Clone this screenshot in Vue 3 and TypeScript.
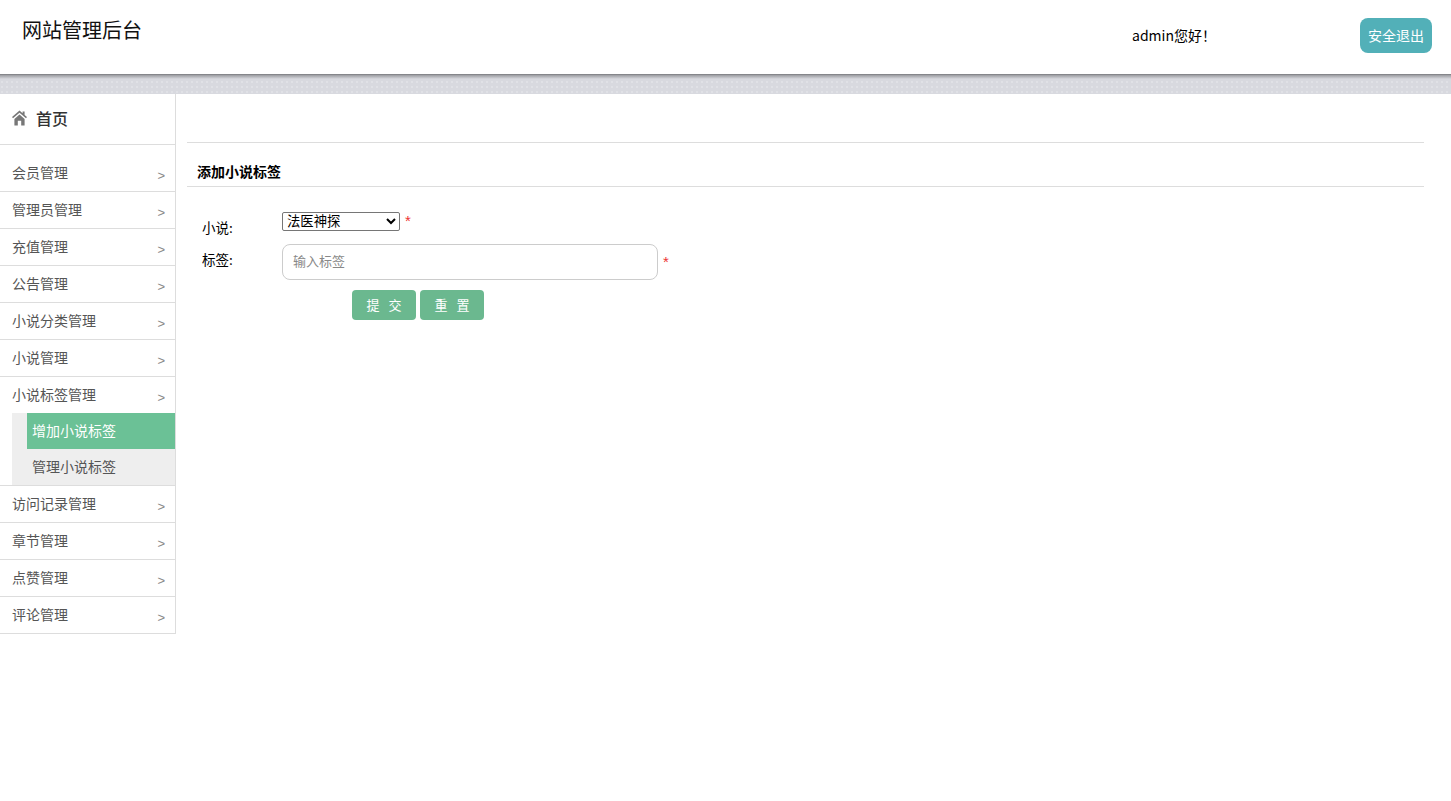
<script setup lang="ts">
import { ref } from 'vue'

interface MenuItem {
  label: string
  children?: { label: string; active?: boolean }[]
}

const menu: MenuItem[] = [
  { label: '会员管理' },
  { label: '管理员管理' },
  { label: '充值管理' },
  { label: '公告管理' },
  { label: '小说分类管理' },
  { label: '小说管理' },
  {
    label: '小说标签管理',
    children: [{ label: '增加小说标签', active: true }, { label: '管理小说标签' }],
  },
  { label: '访问记录管理' },
  { label: '章节管理' },
  { label: '点赞管理' },
  { label: '评论管理' },
]
const novel = ref('法医神探')
const tag = ref('')
</script>

<template>
  <div class="page">
    <header class="top">
      <h1 class="brand">网站管理后台</h1>
      <span class="hello">admin您好！</span>
      <a class="logout">安全退出</a>
    </header>
    <div class="band"></div>
    <div class="body">
      <aside class="side">
        <div class="home">
          <svg class="home-ico" viewBox="0 0 15 16" width="15" height="16" aria-hidden="true">
            <path fill="#777" d="M7.5 0.5 L10.6 3.2 V1.5 H12.6 V5 L15 7.1 L14 8.3 L7.5 2.8 L1 8.3 L0 7.1 Z M2.4 9 L7.5 4.6 L12.6 9 V15.5 H9.2 V10.8 H5.8 V15.5 H2.4 Z" />
          </svg>
          <span>首页</span>
        </div>
        <ul class="menu">
          <li v-for="m in menu" :key="m.label" class="item">
            <div class="row">
              <span>{{ m.label }}</span>
              <span class="arrow">&gt;</span>
            </div>
            <ul v-if="m.children" class="sub">
              <li v-for="c in m.children" :key="c.label" :class="['sub-item', { on: c.active }]">{{ c.label }}</li>
            </ul>
          </li>
        </ul>
      </aside>
      <main class="main">
        <div class="crumb"></div>
        <h2 class="title">添加小说标签</h2>
        <form class="form" @submit.prevent>
          <div class="field first">
            <label class="lab">小说:</label>
            <select v-model="novel" class="sel">
              <option>法医神探</option>
            </select>
            <span class="req req-sel">*</span>
          </div>
          <div class="field">
            <label class="lab">标签:</label>
            <input v-model="tag" class="inp" placeholder="输入标签" />
            <span class="req">*</span>
          </div>
          <div class="btns">
            <button type="button" class="btn">提 交</button>
            <button type="reset" class="btn">重 置</button>
          </div>
        </form>
      </main>
    </div>
  </div>
</template>

<style>
html,
body {
  margin: 0;
  background: #fff;
}
</style>

<style scoped>
.page {
  width: 1451px;
  height: 801px;
  overflow: hidden;
  font-family: "Noto Sans CJK SC", "Liberation Sans", sans-serif;
  font-size: 14px;
  color: #000;
}
.top {
  height: 74px;
  display: flex;
  background: #fff;
}
.brand {
  margin: 15px 0 0 22px;
  width: 1110px;
  font-size: 20px;
  line-height: 30px;
  font-weight: 400;
  color: #111;
}
.hello {
  margin-top: 25px;
  width: 228px;
  font-size: 14px;
  line-height: 21px;
}
.logout {
  margin-top: 18px;
  width: 72px;
  height: 35px;
  line-height: 35px;
  border-radius: 8px;
  background: #52b0b8;
  color: #fff;
  font-size: 14px;
  text-align: center;
}
.band {
  height: 20px;
  box-sizing: border-box;
  border-top: 1px solid #85868a;
  background-color: #d8d9df;
  background-image:
    linear-gradient(#9a9ba0, #d8d9df 4px),
    radial-gradient(circle at 2px 2px, #e0e1e6 0.9px, transparent 1px);
  background-size: 100% 4px, 5px 5px;
  background-repeat: no-repeat, repeat;
}
.body {
  display: flex;
}
.side {
  width: 176px;
  height: 540px;
  box-sizing: border-box;
  border-right: 1px solid #ddd;
  border-bottom: 1px solid #ddd;
  flex: none;
}
.home {
  height: 51px;
  box-sizing: border-box;
  border-bottom: 1px solid #ddd;
  padding: 0 0 0 12px;
  display: flex;
  align-items: center;
  gap: 9px;
  font-size: 16px;
  font-weight: 500;
  color: #333;
}
.home span {
  position: relative;
  top: -1px;
}
.home-ico {
  flex: none;
  position: relative;
  top: -1px;
}
.menu {
  list-style: none;
  margin: 10px 0 0;
  padding: 0;
}
.item {
  border-bottom: 1px solid #ddd;
}
.item:last-child {
  border-bottom: none;
}
.row {
  height: 36px;
  box-sizing: border-box;
  padding: 0 10px 2px 12px;
  display: flex;
  justify-content: space-between;
  align-items: center;
  color: #555;
  font-size: 14px;
}
.arrow {
  position: relative;
  top: 3px;
  color: #888;
  font-family: "Liberation Sans", sans-serif;
  font-size: 13px;
}
.sub {
  list-style: none;
  margin: 0 0 0 12px;
  padding: 0 0 0 15px;
  background: #eee;
}
.sub-item {
  height: 36px;
  line-height: 34px;
  padding-left: 5px;
  color: #555;
}
.sub-item.on {
  background: #6bc196;
  color: #fff;
}
.main {
  margin-left: 11px;
  width: 1237px;
}
.crumb {
  height: 48px;
  border-bottom: 1px solid #ddd;
}
.title {
  margin: 0;
  height: 44px;
  box-sizing: border-box;
  border-bottom: 1px solid #ddd;
  padding: 18px 0 0 10px;
  font-size: 14px;
  line-height: 20px;
  font-weight: 700;
}
.form {
  padding-left: 15px;
}
.field {
  display: flex;
  align-items: flex-start;
  height: 36px;
}
.field.first {
  margin-top: 25px;
  height: 32px;
}
.lab {
  width: 80px;
  flex: none;
  font-size: 13.5px;
  line-height: 20px;
  margin-top: 5px;
}
.sel {
  width: 118px;
  height: 19px;
  padding: 0;
  box-sizing: border-box;
  font: 13.33px "Liberation Sans", "Noto Sans CJK SC", sans-serif;
  background: #fff;
  border: 1px solid #767676;
  border-radius: 2px;
  color: #000;
}
.inp {
  width: 376px;
  height: 36px;
  box-sizing: border-box;
  border: 1px solid #ccc;
  border-radius: 8px;
  padding: 0 10px 2px;
  font: 13px "Liberation Sans", "Noto Sans CJK SC", sans-serif;
  outline: none;
}
.inp::placeholder {
  color: #888;
}
.req {
  margin-left: 5px;
  color: #e33;
  font-family: "Liberation Sans", sans-serif;
  font-size: 15px;
  line-height: 36px;
}
.req-sel {
  line-height: 18px;
}
.btns {
  margin: 10px 0 0 150px;
  display: flex;
  gap: 4px;
}
.btn {
  width: 64px;
  height: 30px;
  padding: 0 0 2px 2px;
  border: none;
  border-radius: 4px;
  background: #6bb88f;
  color: #fff;
  font: 13px "Noto Sans CJK SC", sans-serif;
  letter-spacing: 2px;
  word-spacing: 2px;
}
</style>
